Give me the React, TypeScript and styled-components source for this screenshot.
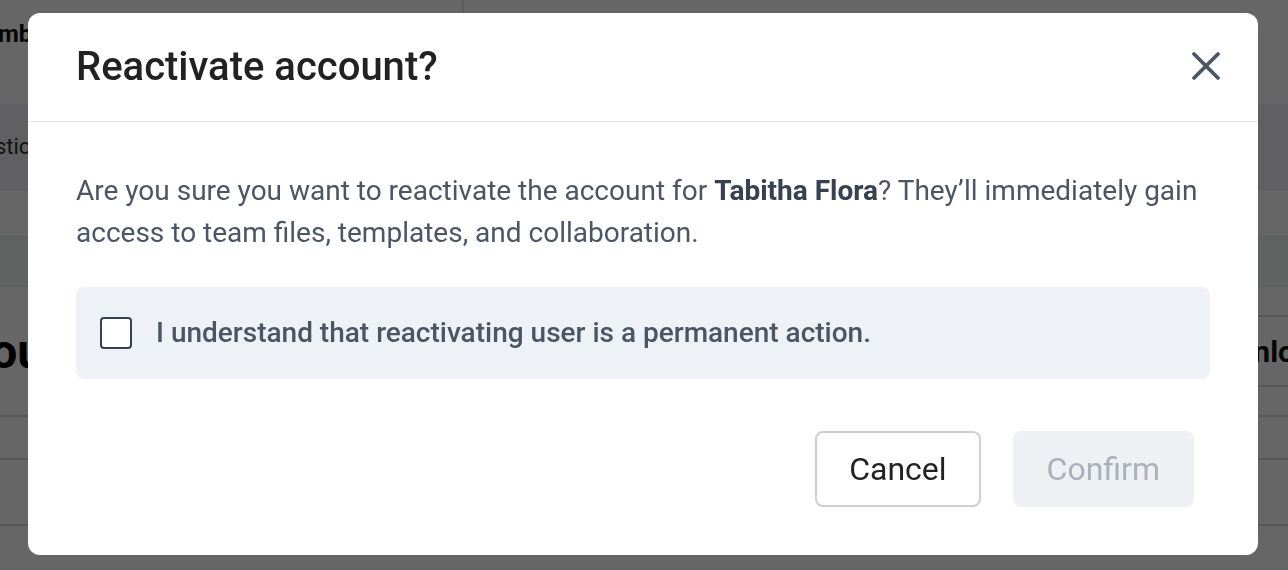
import React, { useState } from "react";
import styled, { createGlobalStyle } from "styled-components";
import { X } from "lucide-react";

const GlobalStyle = createGlobalStyle`
  html, body { margin: 0; padding: 0; }
  body {
    font-family: Roboto, "Liberation Sans", Arial, sans-serif;
    background: #ffffff;
    overflow: hidden;
  }
  * { box-sizing: border-box; }
`;

/* ---------- page behind the dialog ---------- */

const Page = styled.div`
  width: 1288px;
  height: 570px;
  background: #ffffff;
  overflow: hidden;
  display: flex;
  flex-direction: column;

  & > * {
    flex-shrink: 0;
  }
`;

const TopBar = styled.div`
  height: 104px;
  display: grid;
  grid-template-columns: 462px 1fr;
`;

const TopLeft = styled.div`
  padding-top: 18px;
`;

const TopRight = styled.div`
  border-left: 2px solid #e2e4e8;
`;

const PageTitle = styled.h1`
  margin: 0 0 0 -36px;
  font-size: 24px;
  font-weight: 700;
  color: #111;
  line-height: 32px;
`;

const Band = styled.div<{ $h: number; $tone: string }>`
  height: ${(p) => p.$h}px;
  background: ${(p) => p.$tone};
  display: flex;
  align-items: center;
  border-bottom: 1px solid #e6e8eb;
`;

const BandText = styled.span`
  margin-left: -44px;
  font-size: 22px;
  color: #333;
`;

const SectionRow = styled.div`
  height: 130px;
  display: flex;
  justify-content: space-between;
  align-items: center;
  border-bottom: 2px solid #dcdcdc;
  overflow: hidden;
`;

const SectionTitle = styled.h2`
  margin: 0 0 0 -38px;
  font-size: 48px;
  font-weight: 700;
  color: #000;
`;

const SideCell = styled.div`
  height: 72px;
  display: flex;
  align-items: center;
  border-top: 2px solid #d8d8d8;
  border-bottom: 2px solid #d8d8d8;
`;

const SideLink = styled.span`
  margin-right: -40px;
  font-size: 30px;
  font-weight: 700;
  color: #111;
  white-space: nowrap;
`;

const TableRow = styled.div<{ $h: number }>`
  height: ${(p) => p.$h}px;
  border-bottom: 2px solid #d6d6d6;
`;

/* ---------- dialog ---------- */

const Overlay = styled.div`
  position: fixed;
  inset: 0;
  background: rgba(0, 0, 0, 0.6);
  display: flex;
  align-items: center;
  justify-content: center;
  padding: 0 2px 2px 0;
`;

const Dialog = styled.div`
  width: 1230px;
  background: #ffffff;
  border-radius: 12px;
  overflow: hidden;
`;

const Header = styled.div`
  height: 109px;
  display: flex;
  align-items: center;
  justify-content: space-between;
  padding: 0 28px 0 48px;
  border-bottom: 1px solid #e5e7eb;
`;

const Title = styled.h2`
  margin: 0;
  font-size: 40px;
  font-weight: 500;
  color: #222222;
  line-height: 48px;
`;

const CloseButton = styled.button`
  width: 48px;
  height: 48px;
  padding: 0;
  border: 0;
  background: transparent;
  color: #4b5563;
  display: flex;
  align-items: center;
  justify-content: center;
  cursor: pointer;
  margin-top: -3px;
`;

const Body = styled.div`
  padding: 48px 48px 0 48px;
`;

const Message = styled.p`
  margin: 0 0 33px;
  font-size: 28px;
  line-height: 42px;
  color: #4b5563;

  strong {
    font-weight: 700;
    color: #374151;
  }
`;

const AckPanel = styled.label`
  height: 92px;
  display: flex;
  align-items: center;
  gap: 24px;
  padding: 0 24px;
  background: #eef1f5;
  border-radius: 8px;
  cursor: pointer;
`;

const Box = styled.span<{ $on: boolean }>`
  width: 32px;
  height: 32px;
  flex-shrink: 0;
  border: 2px solid #374151;
  border-radius: 4px;
  background: ${(p) => (p.$on ? "#374151" : "#ffffff")};
`;

const HiddenInput = styled.input`
  position: absolute;
  opacity: 0;
  width: 0;
  height: 0;
`;

const AckText = styled.span`
  font-size: 28px;
  font-weight: 500;
  color: #4b5563;
  line-height: 36px;
`;

const Footer = styled.div`
  display: flex;
  justify-content: flex-end;
  gap: 32px;
  padding: 52px 64px 48px 48px;
`;

const Button = styled.button<{ $variant: "outline" | "primary" }>`
  height: 76px;
  padding: 0 32px;
  border-radius: 8px;
  font-family: Roboto, "Liberation Sans", Arial, sans-serif;
  font-size: 32px;
  font-weight: 400;
  cursor: pointer;
  border: 2px solid
    ${(p) => (p.$variant === "outline" ? "#cfcfcf" : "#eef0f4")};
  background: ${(p) => (p.$variant === "outline" ? "#ffffff" : "#eef0f4")};
  color: ${(p) => (p.$variant === "outline" ? "#222222" : "#aab1bb")};

  &:disabled {
    cursor: default;
  }
`;

export default function App() {
  const [agreed, setAgreed] = useState(false);

  return (
    <>
      <GlobalStyle />
      <Page>
        <TopBar>
          <TopLeft>
            <PageTitle>Members</PageTitle>
          </TopLeft>
          <TopRight />
        </TopBar>
        <Band $h={86} $tone="#eff1f5">
          <BandText>Questions</BandText>
        </Band>
        <Band $h={47} $tone="#ffffff" />
        <Band $h={50} $tone="#f3f4f6" />
        <SectionRow>
          <SectionTitle>Your team</SectionTitle>
          <SideCell>
            <SideLink>Download</SideLink>
          </SideCell>
        </SectionRow>
        <TableRow $h={43} />
        <TableRow $h={66} />
        <TableRow $h={60} />
      </Page>

      <Overlay>
        <Dialog role="dialog" aria-modal="true">
          <Header>
            <Title>Reactivate account?</Title>
            <CloseButton aria-label="Close">
              <X size={48} strokeWidth={1.9} />
            </CloseButton>
          </Header>
          <Body>
            <Message>
              Are you sure you want to reactivate the account for{" "}
              <strong>Tabitha Flora</strong>? They’ll immediately gain access
              to team files, templates, and collaboration.
            </Message>
            <AckPanel>
              <HiddenInput
                type="checkbox"
                checked={agreed}
                onChange={(e) => setAgreed(e.target.checked)}
              />
              <Box $on={agreed} />
              <AckText>
                I understand that reactivating user is a permanent action.
              </AckText>
            </AckPanel>
          </Body>
          <Footer>
            <Button $variant="outline">Cancel</Button>
            <Button $variant="primary" disabled={!agreed}>
              Confirm
            </Button>
          </Footer>
        </Dialog>
      </Overlay>
    </>
  );
}
